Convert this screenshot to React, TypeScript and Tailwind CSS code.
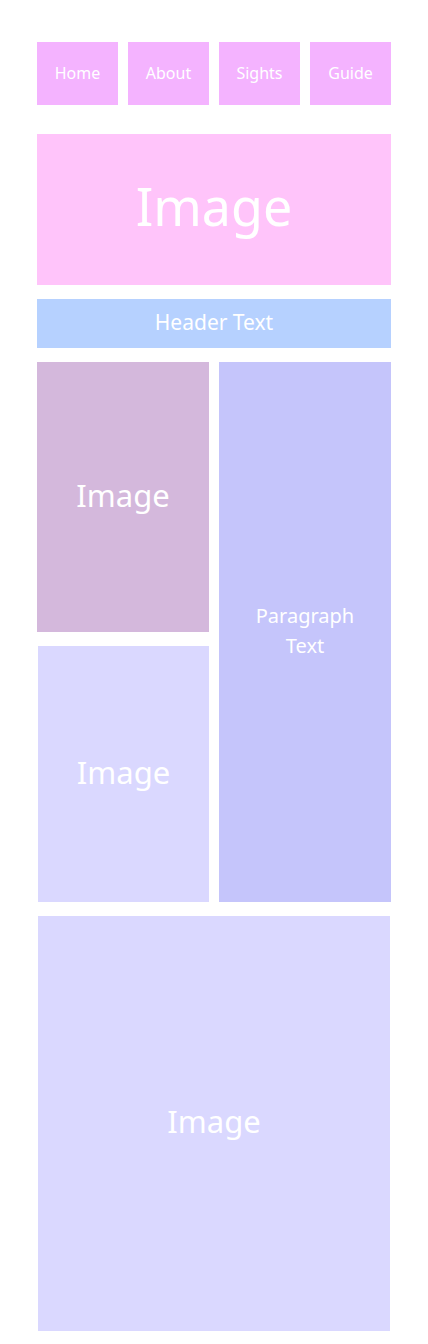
import React from "react";

const links = ["Home", "About", "Sights", "Guide"];

export default function App() {
  return (
    <div className="min-h-screen bg-white px-[37px] pt-[42px] pb-[13px] font-['Noto_Sans','Open_Sans',sans-serif] text-white">
      <nav aria-label="Main" className="grid grid-cols-4 gap-[10px]">
        {links.map((label) => (
          <a key={label} href={`#${label.toLowerCase()}`} className="flex h-[63px] items-center justify-center bg-[#f4b3ff] pb-0.5 text-[16px]">
            {label}
          </a>
        ))}
      </nav>
      <main className="mt-[29px] flex flex-col gap-[14px] text-center">
        <div className="flex h-[151px] items-center justify-center bg-[#ffc4fa] pb-2 text-[52px]">Image</div>
        <h1 className="flex h-[49px] items-center justify-center bg-[#b6d1ff] pb-0.5 text-[21px]">Header Text</h1>
        <div className="grid grid-cols-2 gap-[10px]">
          <div className="flex flex-col gap-[14px]">
            <div className="flex h-[270px] items-center justify-center bg-[#d4b8dc] pb-1 text-[31px]">Image</div>
            <div className="ml-px flex h-[256px] items-center justify-center bg-[#dad8ff] pb-1 text-[31px]">Image</div>
          </div>
          <p className="flex items-center justify-center bg-[#c5c5fb] px-8 pb-0.5 text-[20px] leading-[30px]">Paragraph Text</p>
        </div>
        <div className="mx-px flex h-[415px] items-center justify-center bg-[#dad8ff] pb-1 text-[31px]">Image</div>
      </main>
    </div>
  );
}
